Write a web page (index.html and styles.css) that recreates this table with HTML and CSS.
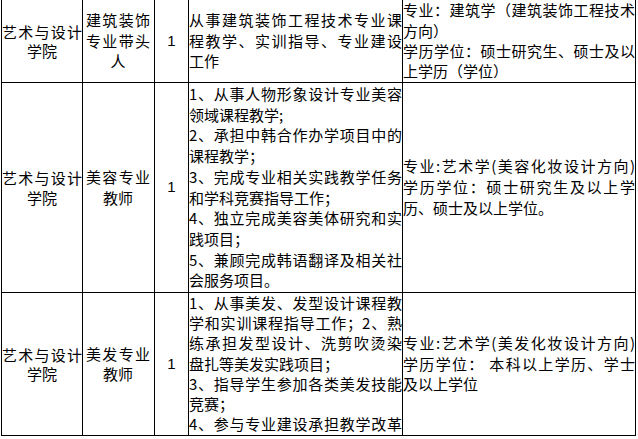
FILE: index.html
```html
<!DOCTYPE html>
<html lang="zh-CN">
<head>
<meta charset="utf-8">
<title>招聘岗位表</title>
<link rel="stylesheet" href="styles.css">
</head>
<body>
<div class="sheet">
  <div class="cell dept"><div class="ln j">艺术与设计</div><div class="ln c">学院</div></div>
  <div class="cell post"><div class="ln j">建筑装饰</div><div class="ln j">专业带头</div><div class="ln c">人</div></div>
  <div class="cell num"><div class="ln c">1</div></div>
  <div class="cell duty">
    <div class="ln j">从事建筑装饰工程技术专业课</div>
    <div class="ln j">程教学、实训指导、专业建设</div>
    <div class="ln">工作</div>
  </div>
  <div class="cell req tight">
    <div class="ln j">专业：建筑学（建筑装饰工程技术</div>
    <div class="ln">方向）</div>
    <div class="ln j">学历学位：硕士研究生、硕士及以</div>
    <div class="ln">上学历（学位）</div>
  </div>

  <div class="cell dept"><div class="ln j">艺术与设计</div><div class="ln c">学院</div></div>
  <div class="cell post"><div class="ln j">美容专业</div><div class="ln c">教师</div></div>
  <div class="cell num"><div class="ln c">1</div></div>
  <div class="cell duty">
    <div class="ln j">1、从事人物形象设计专业美容</div>
    <div class="ln">领域课程教学;</div>
    <div class="ln j">2、承担中韩合作办学项目中的</div>
    <div class="ln">课程教学；</div>
    <div class="ln j">3、完成专业相关实践教学任务</div>
    <div class="ln">和学科竞赛指导工作；</div>
    <div class="ln j">4、独立完成美容美体研究和实</div>
    <div class="ln">践项目；</div>
    <div class="ln j">5、兼顾完成韩语翻译及相关社</div>
    <div class="ln">会服务项目。</div>
  </div>
  <div class="cell req">
    <div class="ln j">专业:艺术学(美容化妆设计方向)</div>
    <div class="ln j">学历学位：硕士研究生及以上学</div>
    <div class="ln">历、硕士及以上学位。</div>
  </div>

  <div class="cell dept"><div class="ln j">艺术与设计</div><div class="ln c">学院</div></div>
  <div class="cell post"><div class="ln j">美发专业</div><div class="ln c">教师</div></div>
  <div class="cell num"><div class="ln c">1</div></div>
  <div class="cell duty top">
    <div class="ln j">1、从事美发、发型设计课程教</div>
    <div class="ln j">学和实训课程指导工作；2、熟</div>
    <div class="ln j">练承担发型设计、洗剪吹烫染</div>
    <div class="ln">盘扎等美发实践项目；</div>
    <div class="ln j">3、指导学生参加各类美发技能</div>
    <div class="ln">竞赛；</div>
    <div class="ln j">4、参与专业建设承担教学改革</div>
  </div>
  <div class="cell req">
    <div class="ln j">专业:艺术学(美发化妆设计方向)</div>
    <div class="ln j">学历学位：&nbsp;本科以上学历、学士</div>
    <div class="ln">及以上学位</div>
  </div>
</div>
</body>
</html>
```
FILE: styles.css
```css
html, body {
  margin: 0;
  padding: 0;
  background: #fff;
}

body {
  font-family: "Noto Sans CJK SC", "Noto Sans", sans-serif;
  font-size: 15px;
  color: #000;
}

.sheet {
  display: grid;
  grid-template-columns: 80px 71px 33px 213px 232px;
  grid-template-rows: 82px 209px 142px;
  gap: 1px;
  width: max-content;
  margin-left: 1px;
  padding: 0 1px 1px 1px;
  background: #000;
}

.cell {
  background: #fff;
  display: flex;
  flex-direction: column;
  justify-content: center;
  overflow: hidden;
}

.cell.top {
  justify-content: flex-start;
}

.ln {
  line-height: 20.7px;
  white-space: nowrap;
  text-align: left;
}

.cell.top .ln {
  line-height: 20.2px;
}

.cell.tight .ln {
  line-height: 20.4px;
}

.ln.j {
  text-align: justify;
  text-align-last: justify;
  text-justify: inter-character;
  white-space: normal;
}

.ln.c {
  text-align: center;
}

.dept .ln {
  line-height: 19.5px;
}

.post {
  padding: 0 4px 0 3px;
}

.post .ln {
  line-height: 20.5px;
}

.num .ln {
  font-family: "Liberation Sans", sans-serif;
}
```
